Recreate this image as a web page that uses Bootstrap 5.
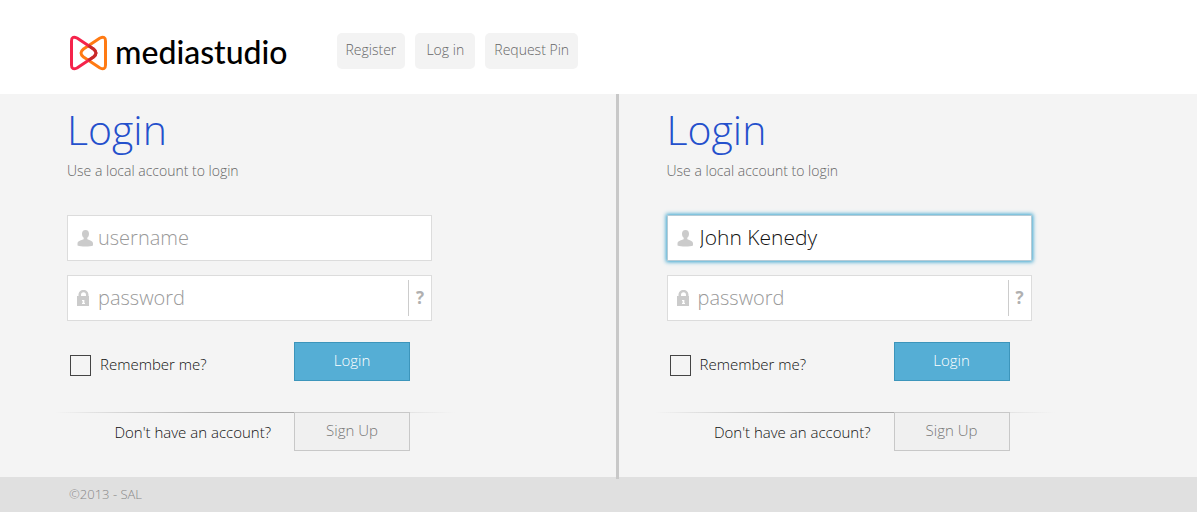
<!DOCTYPE html>
<html lang="en">
<head>
<meta charset="utf-8">
<meta name="viewport" content="width=device-width, initial-scale=1">
<title>mediastudio - Login</title>
<link href="https://cdn.jsdelivr.net/npm/bootstrap@5.3.0/dist/css/bootstrap.min.css" rel="stylesheet">
<style>
body { font-family: "Open Sans", "Noto Sans", sans-serif; font-weight: 300; font-size: 15px; line-height: 20px; color: #111; background: #e0e0e0; }
.site-header { background: #fff; padding: 33px 67px 23px; }
.brand, .brand:hover { color: #000; font-family: Lato, sans-serif; font-weight: 500; font-size: 32px; line-height: 38px; margin-right: 49px; }
.brand svg { margin: 2px 6px 0 2px; }
.top-nav { gap: 10px; }
.btn { font-weight: 300; }
.btn-top { min-width: 60px; background: #f3f3f3; color: #666; font-size: 14px; line-height: 20px; padding: 7px 9px 9px; border: 0; border-radius: 5px; }
.panels { background: #f4f4f4; }
.panel { padding: 13px 20px 26px 48px; }
.panel-first { flex: 0 0 calc(50% + 20px); padding-left: 67px; border-right: 3px solid #c8c8c8; margin-bottom: -2px; position: relative; }
.panel h1 { color: #2450cc; font-weight: 300; font-size: 41px; line-height: 44px; margin: 0; }
.intro { color: #666; font-size: 14px; line-height: 20px; margin: 10px 0 34px; }
.login-form { max-width: 365px; }
.field { height: 46px; background: #fff; border: 1px solid #dcdcdc; margin-bottom: 14px; padding-left: 9px; }
.field svg { fill: #cbcbcb; width: 17px; height: 18px; flex: none; }
.field input { height: 44px; font-size: 21px; font-weight: 300; line-height: 36px; padding: 0 0 2px 4px; border: 0; color: #111; background: none; min-width: 0; box-shadow: none !important; }
.field input::placeholder { color: #999; opacity: 1; font-size: 20px; }
.field.active { border-color: #b5cbd6; box-shadow: 0 0 4px 1px #35a3cf; }
.field.active input { padding-left: 6px; }
.help { flex: none; width: 23px; height: 36px; padding: 0; border: 0; border-left: 1px solid #ccc; border-radius: 0; color: #b0b0b0; font-size: 17px; font-weight: 700; }
.actions { padding: 7px 22px 0 3px; }
.form-check-input.remember { width: 21px; height: 21px; margin: 7px 9px 0 0; border: 1px solid #444; border-radius: 0; background-color: transparent; }
.actions label { margin-top: 5px; }
.btn-wide { width: 116px; height: 39px; border-radius: 0; font-size: 15px; line-height: 20px; padding: 6px 0 10px; }
.btn-login, .btn-login:hover { background: #55aed5; border: 1px solid #3c95bb; color: #fff; }
.btn-signup { background: #f0f0f0; border: 1px solid #c8c8c8; color: #777; }
.signup { width: 400px; max-width: 100%; margin: 31px 0 0 -12px; padding-right: 45px; gap: 23px; background: linear-gradient(90deg, transparent, #aaa 40%, #aaa 65%, #e4e4e4 89%, transparent) top / 100% 1px no-repeat; }
.site-footer { color: #888; font-size: 13px; line-height: 20px; padding: 7px 69px 8px; }
</style>
</head>
<body>
<svg class="d-none" aria-hidden="true">
  <symbol id="user" viewBox="0 0 17 18"><path d="M8.500 1c2.400 0 3.500 1.600 3.500 3.700 0 1.800-.6 3.200-1.700 4v1.600c2 1 5.700 1.500 5.700 4.300v1.900c-1.400.7-4.200 1.100-7.500 1.100S2.400 17.200.5 16.500v-1.900c0-2.800 4.200-3.300 6.200-4.300V8.700C5.600 7.900 5 6.500 5 4.700 5 2.600 6.100 1 8.500 1z"/></symbol>
  <symbol id="lock" viewBox="0 0 17 18"><path fill-rule="evenodd" d="M1.500 7V6C1.500 3 3.500 1 6.500 1s5 2 5 5v1h.5v10H0V7zM4 7h5V6c0-1.800-1-2.800-2.500-2.800S4 4.200 4 6zm1 4v1h.6v2H5v1h3v-1h-.6v-3z"/></symbol>
</svg>
<header class="site-header d-flex flex-wrap align-items-start">
  <a href="#" class="brand d-flex text-decoration-none">
    <svg width="40" height="36" viewBox="0 0 40 36" fill="none" stroke-width="3" stroke-linejoin="round" aria-hidden="true">
      <path stroke="#ff7a13" d="M31 3L14.500 14Q9.500 18 14.500 22L31 33Q36.500 35.500 36.500 30V6Q36.500.5 31 3z"/>
      <path stroke="#f5234b" d="M8 3L24.500 14Q29.500 18 24.500 22L8 33Q2.500 35.500 2.500 30V6Q2.500.5 8 3z"/>
      <path stroke="#c72b29" d="M19.500 10.700L24.500 14Q29.500 18 24.500 22L19.500 25.300"/>
    </svg>
    <span>mediastudio</span>
  </a>
  <nav class="top-nav d-flex" aria-label="Account">
    <a href="#" class="btn btn-top">Register</a>
    <a href="#" class="btn btn-top">Log in</a>
    <a href="#" class="btn btn-top">Request Pin</a>
  </nav>
</header>
<main class="panels d-flex">
  <section class="panel panel-first">
    <h1>Login</h1>
    <p class="intro">Use a local account to login</p>
    <form class="login-form">
      <div class="field d-flex align-items-center">
        <svg aria-hidden="true"><use href="#user"/></svg>
        <input id="user-a" class="form-control" type="text" placeholder="username" aria-label="Username">
      </div>
      <div class="field d-flex align-items-center">
        <svg aria-hidden="true"><use href="#lock"/></svg>
        <input id="pass-a" class="form-control" type="password" placeholder="password" aria-label="Password">
        <button type="button" class="btn help">?</button>
      </div>
      <div class="actions d-flex align-items-center">
        <input id="remember-a" class="form-check-input remember" type="checkbox">
        <label for="remember-a">Remember me?</label>
        <button type="submit" class="btn btn-wide btn-login ms-auto">Login</button>
      </div>
    </form>
    <div class="signup d-flex align-items-center justify-content-end">
      <span>Don't have an account?</span>
      <button type="button" class="btn btn-wide btn-signup">Sign Up</button>
    </div>
  </section>
  <section class="panel flex-grow-1">
    <h1>Login</h1>
    <p class="intro">Use a local account to login</p>
    <form class="login-form">
      <div class="field active d-flex align-items-center">
        <svg aria-hidden="true"><use href="#user"/></svg>
        <input id="user-b" class="form-control" type="text" value="John Kenedy" aria-label="Username">
      </div>
      <div class="field d-flex align-items-center">
        <svg aria-hidden="true"><use href="#lock"/></svg>
        <input id="pass-b" class="form-control" type="password" placeholder="password" aria-label="Password">
        <button type="button" class="btn help">?</button>
      </div>
      <div class="actions d-flex align-items-center">
        <input id="remember-b" class="form-check-input remember" type="checkbox">
        <label for="remember-b">Remember me?</label>
        <button type="submit" class="btn btn-wide btn-login ms-auto">Login</button>
      </div>
    </form>
    <div class="signup d-flex align-items-center justify-content-end">
      <span>Don't have an account?</span>
      <button type="button" class="btn btn-wide btn-signup">Sign Up</button>
    </div>
  </section>
</main>
<footer class="site-footer">©2013 - SAL</footer>
<script src="https://cdn.jsdelivr.net/npm/bootstrap@5.3.0/dist/js/bootstrap.bundle.min.js"></script>
</body>
</html>
